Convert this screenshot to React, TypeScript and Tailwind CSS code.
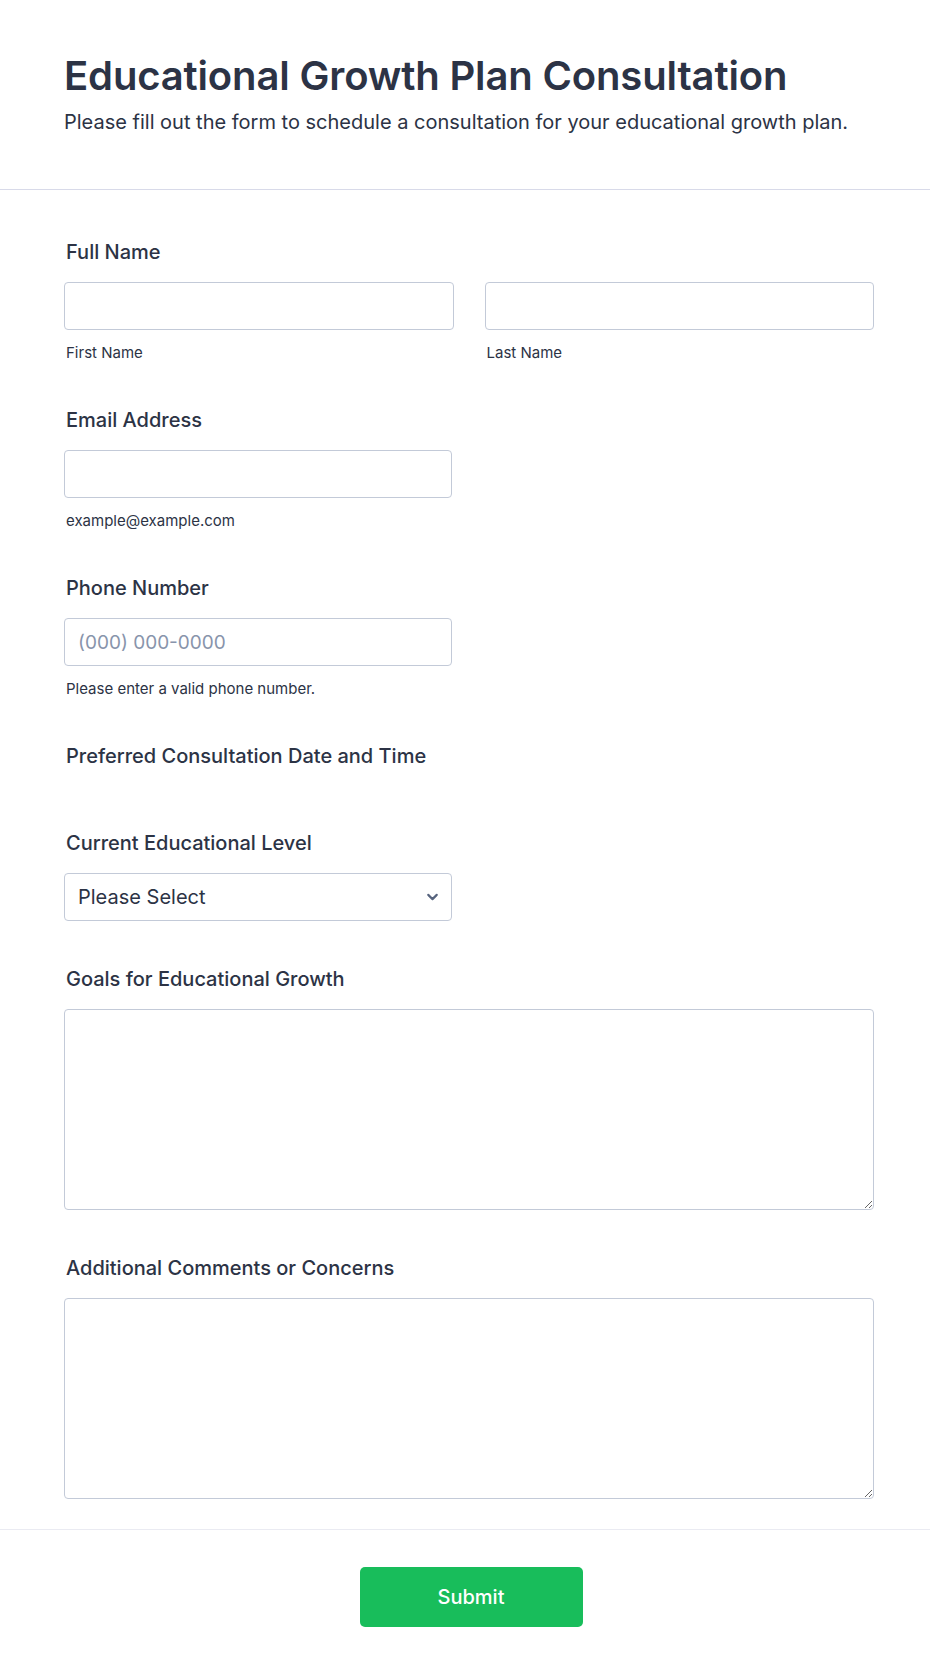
import { ChevronDown } from 'lucide-react';

const font = { fontFamily: 'Inter, "Noto Sans", sans-serif' };

function Label({ children }: { children: React.ReactNode }) {
  return (
    <label className="block pl-[2px] text-[20px] leading-[24px] font-medium text-[#2c3345]">
      {children}
    </label>
  );
}

function Sub({ children }: { children: React.ReactNode }) {
  return (
    <p className="mt-[14px] pl-[2px] text-[15px] leading-[18px] text-[#2c3345]">
      {children}
    </p>
  );
}

const inputCls =
  'block h-[48px] w-full rounded-[4px] border border-[#c3cad8] bg-white px-[13px] text-[20px] text-[#2c3345] outline-none placeholder:text-[19px] placeholder:text-[#8894ab]';

export default function App() {
  return (
    <div className="min-h-[1674px] bg-white" style={font}>
      <header className="border-b border-[#d8dae9] px-[64px] pt-[52px] pb-[53px]">
        <h1 className="text-[40px] leading-[48px] font-semibold tracking-[-0.15px] text-[#2c3345]">
          Educational Growth Plan Consultation
        </h1>
        <p className="mt-[8px] text-[20px] leading-[28px] text-[#2c3345]">
          Please fill out the form to schedule a consultation for your educational growth plan.
        </p>
      </header>

      <form className="flex flex-col gap-[46px] pt-[50px] pb-[30px] pl-[64px] pr-[56px]">
        <div>
          <Label>Full Name</Label>
          <div className="mt-[18px] grid grid-cols-2 gap-[31px]">
            <div>
              <input className={inputCls} />
              <Sub>First Name</Sub>
            </div>
            <div>
              <input className={inputCls} />
              <Sub>Last Name</Sub>
            </div>
          </div>
        </div>

        <div>
          <Label>Email Address</Label>
          <div className="mt-[18px] w-[388px]">
            <input className={inputCls} />
            <Sub>example@example.com</Sub>
          </div>
        </div>

        <div>
          <Label>Phone Number</Label>
          <div className="mt-[18px] w-[388px]">
            <input className={inputCls} placeholder="(000) 000-0000" />
            <Sub>Please enter a valid phone number.</Sub>
          </div>
        </div>

        <div>
          <Label>Preferred Consultation Date and Time</Label>
          <div className="h-[17px]" />
        </div>

        <div>
          <Label>Current Educational Level</Label>
          <div className="relative mt-[18px] w-[388px]">
            <div className="flex h-[48px] items-center rounded-[4px] border border-[#c3cad8] bg-white px-[13px] text-[20px] text-[#2c3345]">
              Please Select
            </div>
            <ChevronDown
              className="absolute top-1/2 right-[11px] h-[17px] w-[17px] -translate-y-1/2 text-[#57647e]"
              strokeWidth={3}
            />
          </div>
        </div>

        <div>
          <Label>Goals for Educational Growth</Label>
          <textarea className="mt-[18px] block h-[201px] w-full rounded-[4px] border border-[#c3cad8] bg-white outline-none" />
        </div>

        <div>
          <Label>Additional Comments or Concerns</Label>
          <textarea className="mt-[18px] block h-[201px] w-full rounded-[4px] border border-[#c3cad8] bg-white outline-none" />
        </div>
      </form>

      <div className="flex justify-center border-t border-[#eaebf2] pt-[37px] pb-[49px] pl-[68px] pr-[56px]">
        <button className="h-[60px] w-[223px] rounded-[5px] bg-[#18bd5b] text-[20px] font-medium text-white">
          Submit
        </button>
      </div>
    </div>
  );
}
